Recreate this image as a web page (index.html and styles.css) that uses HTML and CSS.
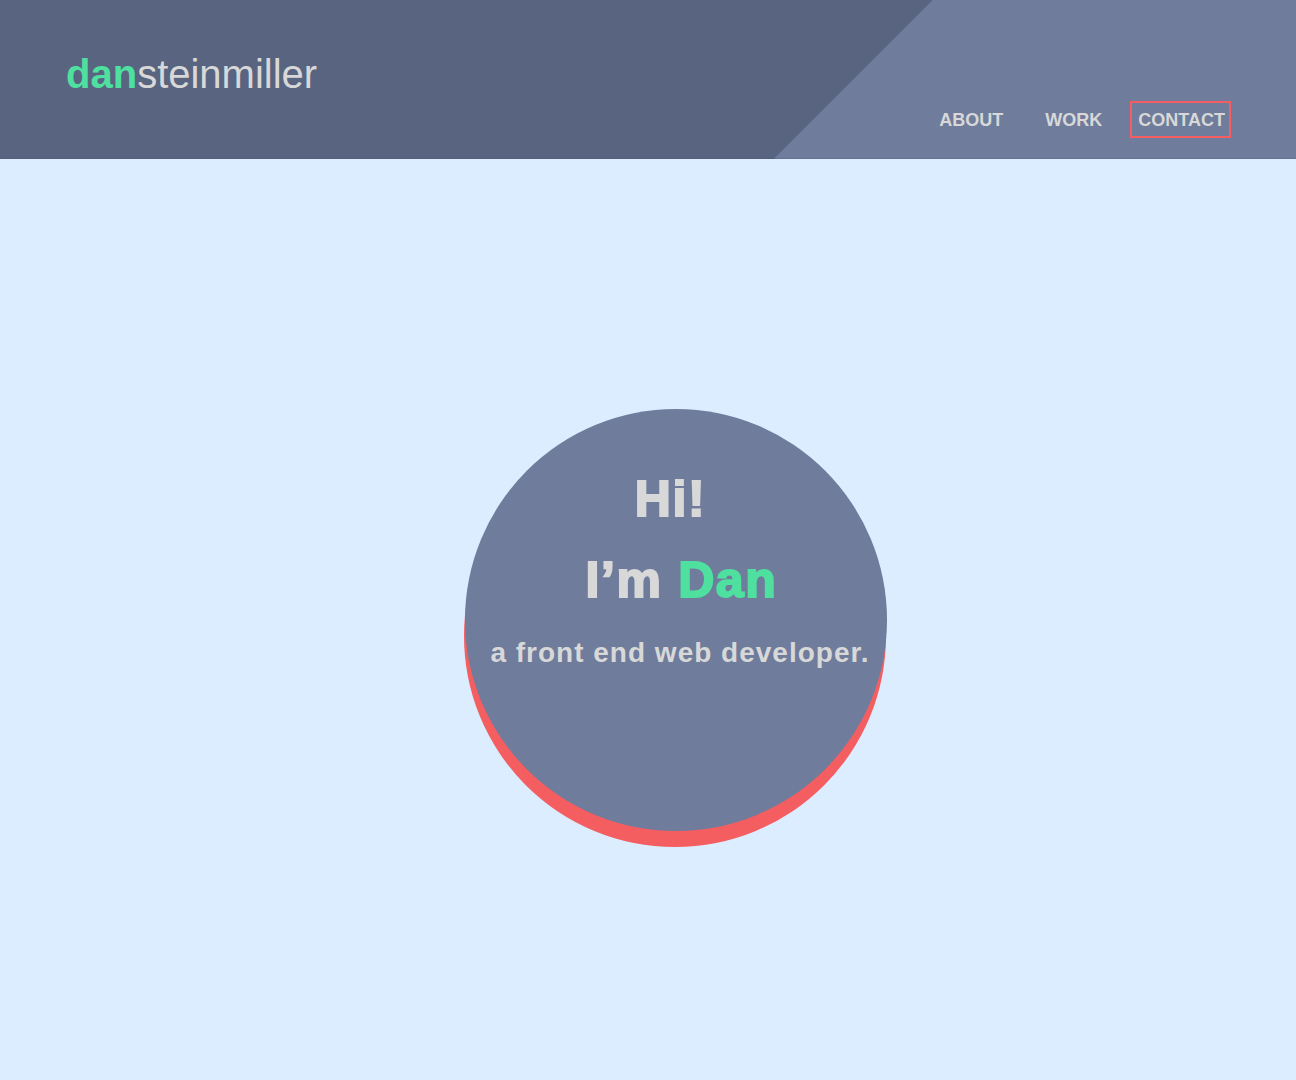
FILE: index.html
```html
<!DOCTYPE html>
<html lang="en">
<head>
<meta charset="utf-8">
<title>Dan Steinmiller</title>
<link rel="stylesheet" href="styles.css">
</head>
<body>
<header class="site-header">
  <a class="logo" href="#"><span class="logo-first">dan</span><span class="logo-last">steinmiller</span></a>
  <nav class="nav">
    <a class="nav-link nav-about" href="#">ABOUT</a>
    <a class="nav-link nav-work" href="#">WORK</a>
    <a class="nav-link nav-contact is-active" href="#">CONTACT</a>
  </nav>
</header>
<main class="hero">
  <div class="bubble">
    <h1 class="hi">Hi!</h1>
    <h2 class="name">I’m <span class="accent">Dan</span></h2>
    <p class="role">a front end web developer.</p>
  </div>
</main>
</body>
</html>
```
FILE: styles.css
```css
html, body {
  margin: 0;
  padding: 0;
}
body {
  background: #dbedfe;
  font-family: "Liberation Sans", Arial, sans-serif;
  color: #d8d8d8;
  min-height: 1080px;
}
.site-header {
  height: 159px;
  box-sizing: border-box;
  display: flex;
  justify-content: space-between;
  align-items: flex-start;
  padding: 0 65px 0 66px;
  border-bottom: 1px solid rgba(60, 70, 100, 0.18);
  background: linear-gradient(135deg, #586480 0%, #586480 64.05%, #6f7c9c 64.15%, #6f7c9c 100%);
  background-origin: border-box;
  background-repeat: no-repeat;
}
.logo {
  text-decoration: none;
  font-size: 40px;
  line-height: 46px;
  margin-top: 51px;
  white-space: nowrap;
}
.logo-first {
  color: #4fe0a0;
  font-weight: bold;
}
.logo-last {
  color: #d8d8d8;
}
.nav {
  align-self: flex-end;
  display: flex;
  margin-bottom: 20px;
}
.nav-link {
  display: block;
  text-decoration: none;
  color: #d8d8d8;
  font-weight: bold;
  font-size: 18px;
  line-height: 32px;
  padding: 1px 4px 0 6px;
  border: 2px solid transparent;
}
.nav-about {
  margin-right: 1px;
}
.nav-work {
  margin-left: 27px;
}
.nav-contact {
  margin-left: 22px;
}
.nav-link.is-active {
  border-color: #f45e61;
}
.hero {
  display: flex;
  justify-content: flex-start;
  padding-left: 465px;
  padding-top: 250px;
}
.bubble {
  width: 422px;
  height: 422px;
  border-radius: 50%;
  background: #6f7c9c;
  box-shadow: -1px 16px 0 0 #f45e61;
  box-sizing: border-box;
  padding-top: 60px;
  text-align: center;
}
.hi, .name {
  margin: 0;
  font-size: 50px;
  line-height: 60px;
  font-weight: bold;
  letter-spacing: 1.6px;
  -webkit-text-stroke: 2px currentColor;
  color: #d8d8d8;
}
.hi {
  padding-right: 11px;
}
.name {
  margin-top: 21px;
  padding-left: 11px;
}
.accent {
  color: #4fe0a0;
}
.role {
  margin: 23px 0 0;
  padding-left: 8px;
  font-size: 28px;
  line-height: 40px;
  font-weight: bold;
  letter-spacing: 1px;
  color: #d8d8d8;
}
```
